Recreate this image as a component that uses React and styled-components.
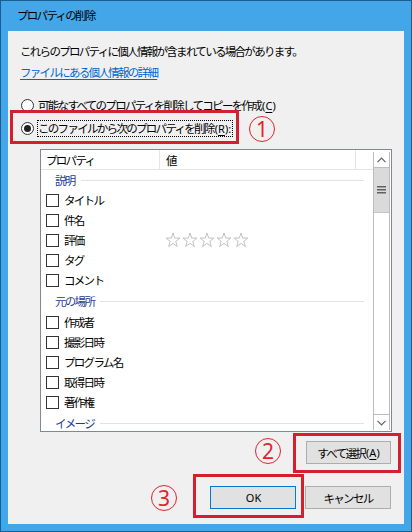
import React from "react";
import styled, { createGlobalStyle } from "styled-components";

const Global = createGlobalStyle`
  html, body { margin: 0; padding: 0; background: #fff; }
  body {
    font-family: "Noto Sans CJK JP", "Noto Sans", sans-serif;
    font-size: 11.5px;
    letter-spacing: -1.7px;
    color: #000;
  }
  * { box-sizing: border-box; }
`;

const Window = styled.div`
  position: relative;
  width: 412px;
  height: 532px;
  background: #43a6e8;
  border: 1px solid #1b5d8f;
  display: flex;
  flex-direction: column;
`;

const TitleBar = styled.div`
  height: 30px;
  display: flex;
  align-items: center;
  padding-left: 16px;
  padding-bottom: 2px;
  color: #000;
`;

const Client = styled.div`
  flex: 1;
  margin: 0 7px 7px 7px;
  background: #f0f0f0;
  display: flex;
  flex-direction: column;
  padding-top: 12px;
`;

const Line = styled.div`
  height: 16px;
  line-height: 16px;
  padding-left: 12px;
  margin-top: ${(p) => p.$mt || 0}px;
  white-space: nowrap;
`;

const Link = styled.span`
  color: #0066cc;
  text-decoration: underline;
  text-underline-offset: 2px;
`;

const RadioGroup = styled.div`
  margin-top: 16px;
  display: flex;
  flex-direction: column;
  gap: 5px;
  padding-left: 13px;
`;

const RadioRow = styled.label`
  height: 18px;
  display: flex;
  align-items: center;
  gap: 3px;
  white-space: nowrap;
`;

const RadioCircle = styled.span`
  width: 13px;
  height: 13px;
  border-radius: 50%;
  border: 1px solid #333;
  background: #fff;
  display: flex;
  align-items: center;
  justify-content: center;
  &::after {
    content: "";
    display: ${(p) => (p.$on ? "block" : "none")};
    width: 7px;
    height: 7px;
    border-radius: 50%;
    background: #222;
  }
`;

const RadioText = styled.span`
  padding: 0 1px 0 0;
  line-height: 15px;
  border: 1px ${(p) => (p.$focus ? "dotted #000" : "solid transparent")};
`;

const U = styled.span`
  text-decoration: underline;
  text-underline-offset: 2px;
  letter-spacing: 0;
`;

const Latin = styled.span`
  letter-spacing: 0;
  margin-left: 1px;
  font-family: "Noto Sans", sans-serif;
  font-size: 11px;
`;

const ListBox = styled.div`
  margin: 12px 0 0 32px;
  width: 352px;
  height: 283px;
  border: 1px solid #828790;
  background: #fff;
  display: flex;
`;

const ListContent = styled.div`
  flex: 1;
  overflow: hidden;
  display: flex;
  flex-direction: column;
`;

const Header = styled.div`
  height: 20px;
  flex-shrink: 0;
  display: grid;
  grid-template-columns: 119px 196px 1fr;
  border-bottom: 1px solid #e5e5e5;
`;

const HeaderCell = styled.div`
  display: flex;
  align-items: center;
  padding-left: ${(p) => p.$pl || 5}px;
  border-right: 1px solid #e5e5e5;
  &:last-child { border-right: none; }
`;

const GroupRow = styled.div`
  height: ${(p) => p.$h || 22}px;
  flex-shrink: 0;
  display: flex;
  align-items: center;
  padding-left: 14px;
  padding-right: 9px;
  color: #1e3c96;
  gap: 6px;
  &::after {
    content: "";
    flex: 1;
    height: 1px;
    background: #e2e2e2;
  }
`;

const ItemRow = styled.div`
  height: 20px;
  flex-shrink: 0;
  display: grid;
  grid-template-columns: 119px 1fr;
  align-items: center;
`;

const ItemName = styled.div`
  display: flex;
  align-items: center;
  gap: 5px;
  padding-left: 5px;
  white-space: nowrap;
`;

const Check = styled.span`
  width: 13px;
  height: 13px;
  border: 1px solid #333;
  background: #fff;
  flex-shrink: 0;
`;

const Stars = styled.div`
  display: flex;
  gap: 1px;
  padding-left: 5px;
`;

const Scrollbar = styled.div`
  width: 17px;
  margin: 2px 1px 1px 0;
  border-left: 1px solid #bcbcbc;
  border-right: 1px solid #bcbcbc;
  background: #fff;
  display: flex;
  flex-direction: column;
`;

const ArrowBtn = styled.div`
  height: 16px;
  display: flex;
  align-items: center;
  justify-content: center;
  border-top: ${(p) => (p.$down ? "1px solid #bcbcbc" : "none")};
  border-bottom: ${(p) => (p.$down ? "none" : "1px solid #bcbcbc")};
`;

const Track = styled.div`
  flex: 1;
  display: flex;
  flex-direction: column;
`;

const Thumb = styled.div`
  height: 45px;
  background: #dadada;
  border-bottom: 1px solid #c4c4c4;
  display: flex;
  align-items: center;
  justify-content: center;
`;

const ButtonRow = styled.div`
  display: flex;
  justify-content: flex-end;
  gap: 9px;
  padding-right: 13px;
  margin-top: ${(p) => p.$mt}px;
`;

const Button = styled.div`
  width: ${(p) => p.$w || 86}px;
  height: 23px;
  background: #e1e1e1;
  border: 1px solid ${(p) => (p.$default ? "#0078d7" : "#adadad")};
  display: flex;
  align-items: center;
  justify-content: center;
  white-space: nowrap;
`;

const RedBox = styled.div`
  position: absolute;
  border: 3px solid #d2202e;
  pointer-events: none;
`;

const Badge = styled.div`
  position: absolute;
  width: 26px;
  height: 26px;
  border-radius: 50%;
  border: 1.5px solid #e0242c;
  display: flex;
  align-items: center;
  justify-content: center;
  font-family: "Noto Sans", sans-serif;
  font-size: 21px;
  letter-spacing: 0;
  line-height: 1;
  color: #e0242c;
`;

const Star = () => (
  <svg width="16" height="16" viewBox="0 0 16 16">
    <path
      d="M8 1 L9.7 6 L15 6.1 L10.8 9.3 L12.3 14.5 L8 11.4 L3.7 14.5 L5.2 9.3 L1 6.1 L6.3 6 Z"
      fill="none"
      stroke="#c2c2c2"
      strokeWidth="1"
    />
  </svg>
);

const Chevron = ({ down }) => (
  <svg width="9" height="6" viewBox="0 0 9 6">
    <path
      d={down ? "M0.5 0.8 L4.5 4.8 L8.5 0.8" : "M0.5 5.2 L4.5 1.2 L8.5 5.2"}
      fill="none"
      stroke="#606060"
      strokeWidth="1.2"
    />
  </svg>
);

const Grip = () => (
  <svg width="9" height="8" viewBox="0 0 9 8">
    <rect x="0" y="0" width="9" height="1.5" fill="#606060" />
    <rect x="0" y="3" width="9" height="1.5" fill="#606060" />
    <rect x="0" y="6" width="9" height="1.5" fill="#606060" />
  </svg>
);

const group1 = ["タイトル", "件名", "評価", "タグ", "コメント"];
const group2 = ["作成者", "撮影日時", "プログラム名", "取得日時", "著作権"];

export default function App() {
  return (
    <>
      <Global />
      <Window>
        <TitleBar>プロパティの削除</TitleBar>
        <Client>
          <Line>これらのプロパティに個人情報が含まれている場合があります。</Line>
          <Line $mt={5}>
            <Link>ファイルにある個人情報の詳細</Link>
          </Line>
          <RadioGroup>
            <RadioRow>
              <RadioCircle />
              <RadioText>
                可能なすべてのプロパティを削除してコピーを作成<Latin>(<U>C</U>)</Latin>
              </RadioText>
            </RadioRow>
            <RadioRow>
              <RadioCircle $on />
              <RadioText $focus>
                このファイルから次のプロパティを削除<Latin>(<U>R</U>):</Latin>
              </RadioText>
            </RadioRow>
          </RadioGroup>
          <ListBox>
            <ListContent>
              <Header>
                <HeaderCell $pl={5}>プロパティ</HeaderCell>
                <HeaderCell $pl={6}>値</HeaderCell>
                <HeaderCell />
              </Header>
              <GroupRow $h={20}>説明</GroupRow>
              {group1.map((t) => (
                <ItemRow key={t}>
                  <ItemName>
                    <Check />
                    {t}
                  </ItemName>
                  {t === "評価" ? (
                    <Stars>
                      <Star />
                      <Star />
                      <Star />
                      <Star />
                      <Star />
                    </Stars>
                  ) : (
                    <div />
                  )}
                </ItemRow>
              ))}
              <GroupRow>元の場所</GroupRow>
              {group2.map((t) => (
                <ItemRow key={t}>
                  <ItemName>
                    <Check />
                    {t}
                  </ItemName>
                  <div />
                </ItemRow>
              ))}
              <GroupRow>イメージ</GroupRow>
            </ListContent>
            <Scrollbar>
              <ArrowBtn>
                <Chevron />
              </ArrowBtn>
              <Track>
                <Thumb>
                  <Grip />
                </Thumb>
              </Track>
              <ArrowBtn $down>
                <Chevron down />
              </ArrowBtn>
            </Scrollbar>
          </ListBox>
          <ButtonRow $mt={9}>
            <Button $w={85}>
              すべて選択<Latin>(<U>A</U>)</Latin>
            </Button>
          </ButtonRow>
          <ButtonRow $mt={22}>
            <Button $default>
              <Latin>OK</Latin>
            </Button>
            <Button>キャンセル</Button>
          </ButtonRow>
        </Client>
        <RedBox style={{ left: 9, top: 109, width: 229, height: 34 }} />
        <RedBox style={{ left: 292, top: 432, width: 108, height: 40 }} />
        <RedBox style={{ left: 192, top: 473, width: 111, height: 44 }} />
        <Badge style={{ left: 248, top: 115 }}>1</Badge>
        <Badge style={{ left: 254, top: 437 }}>2</Badge>
        <Badge style={{ left: 150, top: 484 }}>3</Badge>
      </Window>
    </>
  );
}
